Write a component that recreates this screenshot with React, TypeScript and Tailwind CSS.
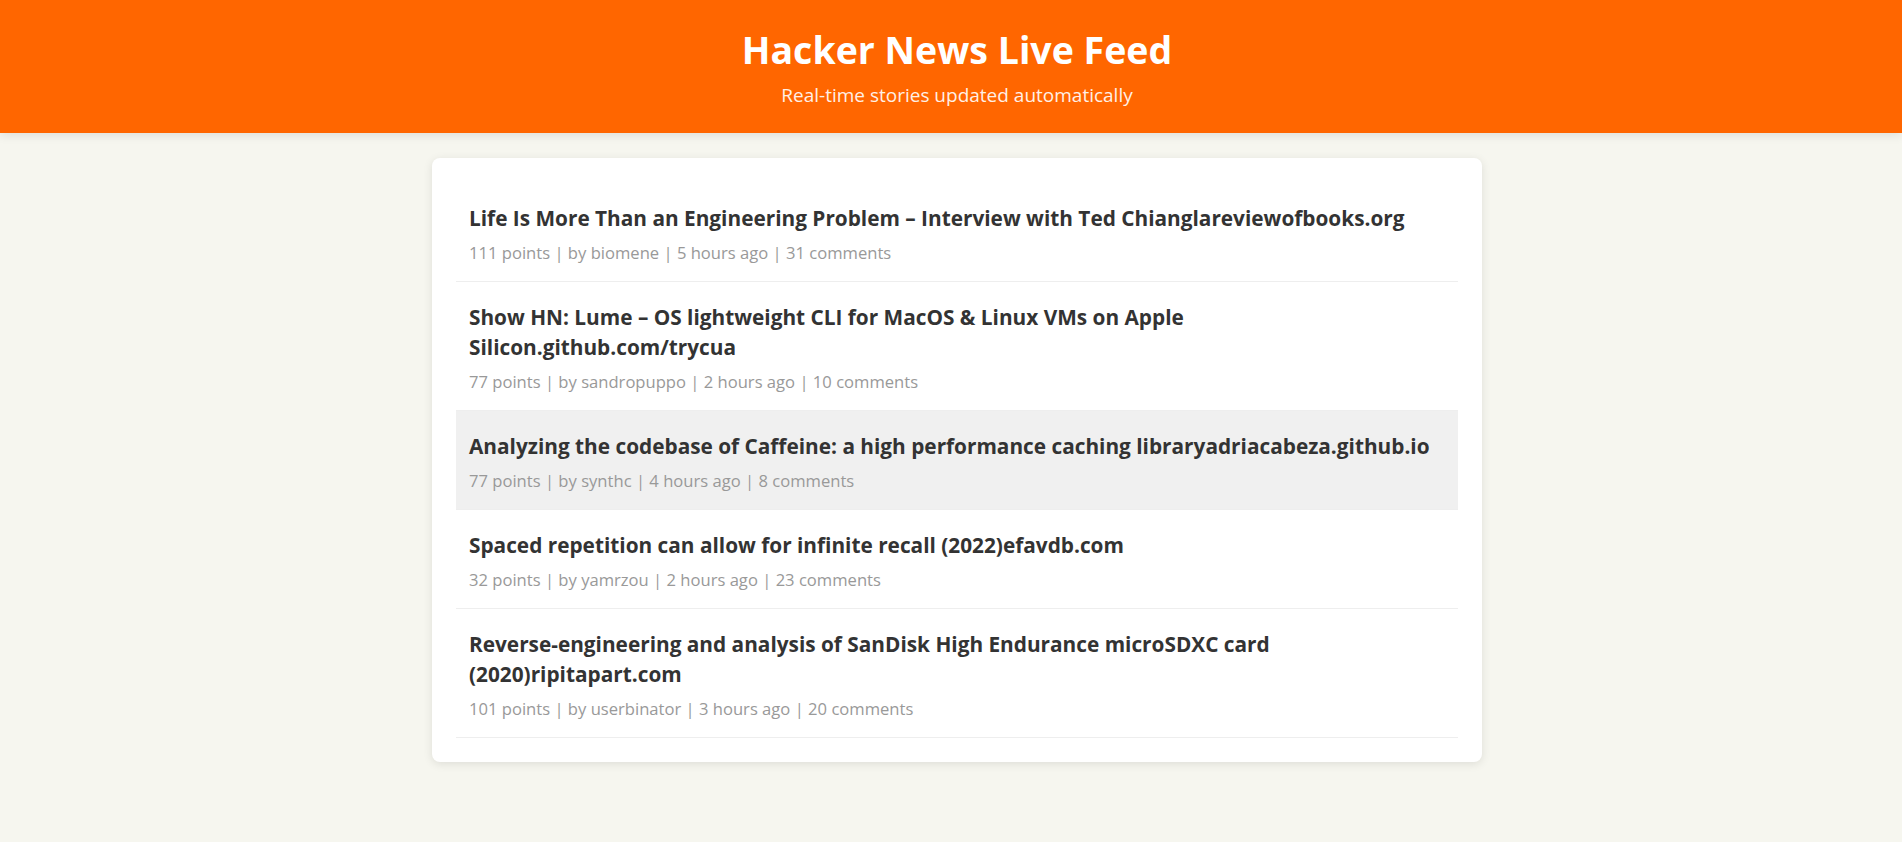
const stories = [
  {
    id: 1,
    title: 'Life Is More Than an Engineering Problem – Interview with Ted Chiang',
    domain: 'lareviewofbooks.org',
    points: 111,
    by: 'biomene',
    ago: '5 hours ago',
    comments: 31,
  },
  {
    id: 2,
    title: 'Show HN: Lume – OS lightweight CLI for MacOS & Linux VMs on Apple Silicon',
    domain: '.github.com/trycua',
    points: 77,
    by: 'sandropuppo',
    ago: '2 hours ago',
    comments: 10,
  },
  {
    id: 3,
    title: 'Analyzing the codebase of Caffeine: a high performance caching library',
    domain: 'adriacabeza.github.io',
    points: 77,
    by: 'synthc',
    ago: '4 hours ago',
    comments: 8,
    hovered: true,
  },
  {
    id: 4,
    title: 'Spaced repetition can allow for infinite recall (2022)',
    domain: 'efavdb.com',
    points: 32,
    by: 'yamrzou',
    ago: '2 hours ago',
    comments: 23,
  },
  {
    id: 5,
    title: 'Reverse-engineering and analysis of SanDisk High Endurance microSDXC card (2020)',
    domain: 'ripitapart.com',
    points: 101,
    by: 'userbinator',
    ago: '3 hours ago',
    comments: 20,
  },
];

type Story = (typeof stories)[number];

const StoryItem = ({ story }: { story: Story }) => (
  <div
    className={`border-b border-[#eee] pt-5 pr-3 pb-4 pl-[13px] ${story.hovered ? 'bg-[#f0f0f0]' : ''}`}
  >
    <h3 className="mb-2 text-[20.8px] leading-[30px] font-bold text-[#333]">
      {story.title}
      {story.domain}
    </h3>
    <div className="text-[16.6px] leading-6 text-[#999]">
      {story.points} points | by {story.by} | {story.ago} | {story.comments} comments
    </div>
  </div>
);

export default function App() {
  return (
    <div className="min-h-screen bg-[#f6f6ef] font-['Open_Sans',sans-serif]">
      <header className="bg-[#ff6600] pt-[27px] pr-4 pb-6 pl-7 text-center text-white shadow-[0_2px_10px_rgba(0,0,0,0.1)]">
        <h1 className="text-[37.5px] leading-[46px] font-bold">Hacker News Live Feed</h1>
        <p className="mt-2 text-[19px] leading-7 opacity-90">Real-time stories updated automatically</p>
      </header>

      <main className="pr-4 pl-7">
        <div className="mx-auto mt-[25px] w-[1050px] rounded-lg bg-white px-6 pt-[25px] pb-6 shadow-[0_2px_10px_rgba(0,0,0,0.1)]">
          {stories.map(story => (
            <StoryItem key={story.id} story={story} />
          ))}
        </div>
      </main>
    </div>
  );
}
